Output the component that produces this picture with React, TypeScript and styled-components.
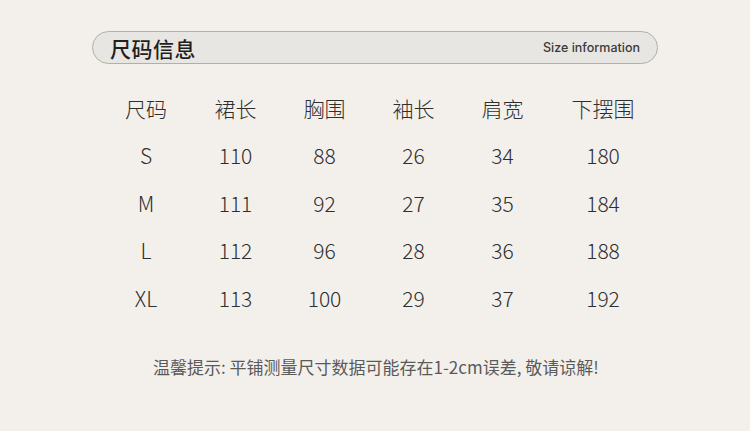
import React from "react";
import styled, { createGlobalStyle } from "styled-components";

const headers = ["尺码", "裙长", "胸围", "袖长", "肩宽", "下摆围"];
const rows = [
  ["S", "110", "88", "26", "34", "180"],
  ["M", "111", "92", "27", "35", "184"],
  ["L", "112", "96", "28", "36", "188"],
  ["XL", "113", "100", "29", "37", "192"],
];

export default function App() {
  return (
    <>
      <GlobalStyle />
      <Page>
        <TitleBar>
          <Title>尺码信息</Title>
          <SubTitle>Size information</SubTitle>
        </TitleBar>
        <Table>
          {headers.map((h) => (
            <HeadCell key={h}>{h}</HeadCell>
          ))}
          {rows.map((row) =>
            row.map((cell, i) => <Cell key={row[0] + i}>{cell}</Cell>)
          )}
        </Table>
        <Note>温馨提示: 平铺测量尺寸数据可能存在1-2cm误差, 敬请谅解!</Note>
      </Page>
    </>
  );
}

const GlobalStyle = createGlobalStyle`
  html, body {
    margin: 0;
    padding: 0;
    background: #f3f0ec;
  }
`;

const Page = styled.div`
  width: 750px;
  height: 431px;
  box-sizing: border-box;
  padding-top: 31px;
  background: #f3f0ec;
  font-family: "Noto Sans CJK SC", "Noto Sans", sans-serif;
  display: flex;
  flex-direction: column;
`;

const TitleBar = styled.div`
  margin-left: 92px;
  width: 566px;
  height: 33px;
  box-sizing: border-box;
  border: 1.5px solid #b3aea7;
  border-radius: 17px;
  background: #e8e6e2;
  display: flex;
  align-items: center;
  justify-content: space-between;
  padding: 0 17px 0 17px;
`;

const Title = styled.span`
  font-size: 21px;
  font-weight: 500;
  color: #1f1f1f;
  letter-spacing: 0.5px;
`;

const SubTitle = styled.span`
  font-family: "Inter", "Lato", sans-serif;
  font-size: 12.5px;
  font-weight: 500;
  color: #3a3a3a;
`;

const Table = styled.div`
  margin-left: 101px;
  margin-top: 20px;
  display: grid;
  grid-template-columns: 90px 89px 89px 89px 89px 112px;
  grid-auto-rows: 47.5px;
  align-items: center;
`;

const HeadCell = styled.div`
  text-align: center;
  font-size: 21px;
  font-weight: 300;
  color: #2e2e2e;
`;

const Cell = styled(HeadCell)``;

const Note = styled.div`
  margin-top: 32px;
  margin-left: 153px;
  font-size: 17px;
  font-weight: 400;
  color: #5a5a5a;
`;
